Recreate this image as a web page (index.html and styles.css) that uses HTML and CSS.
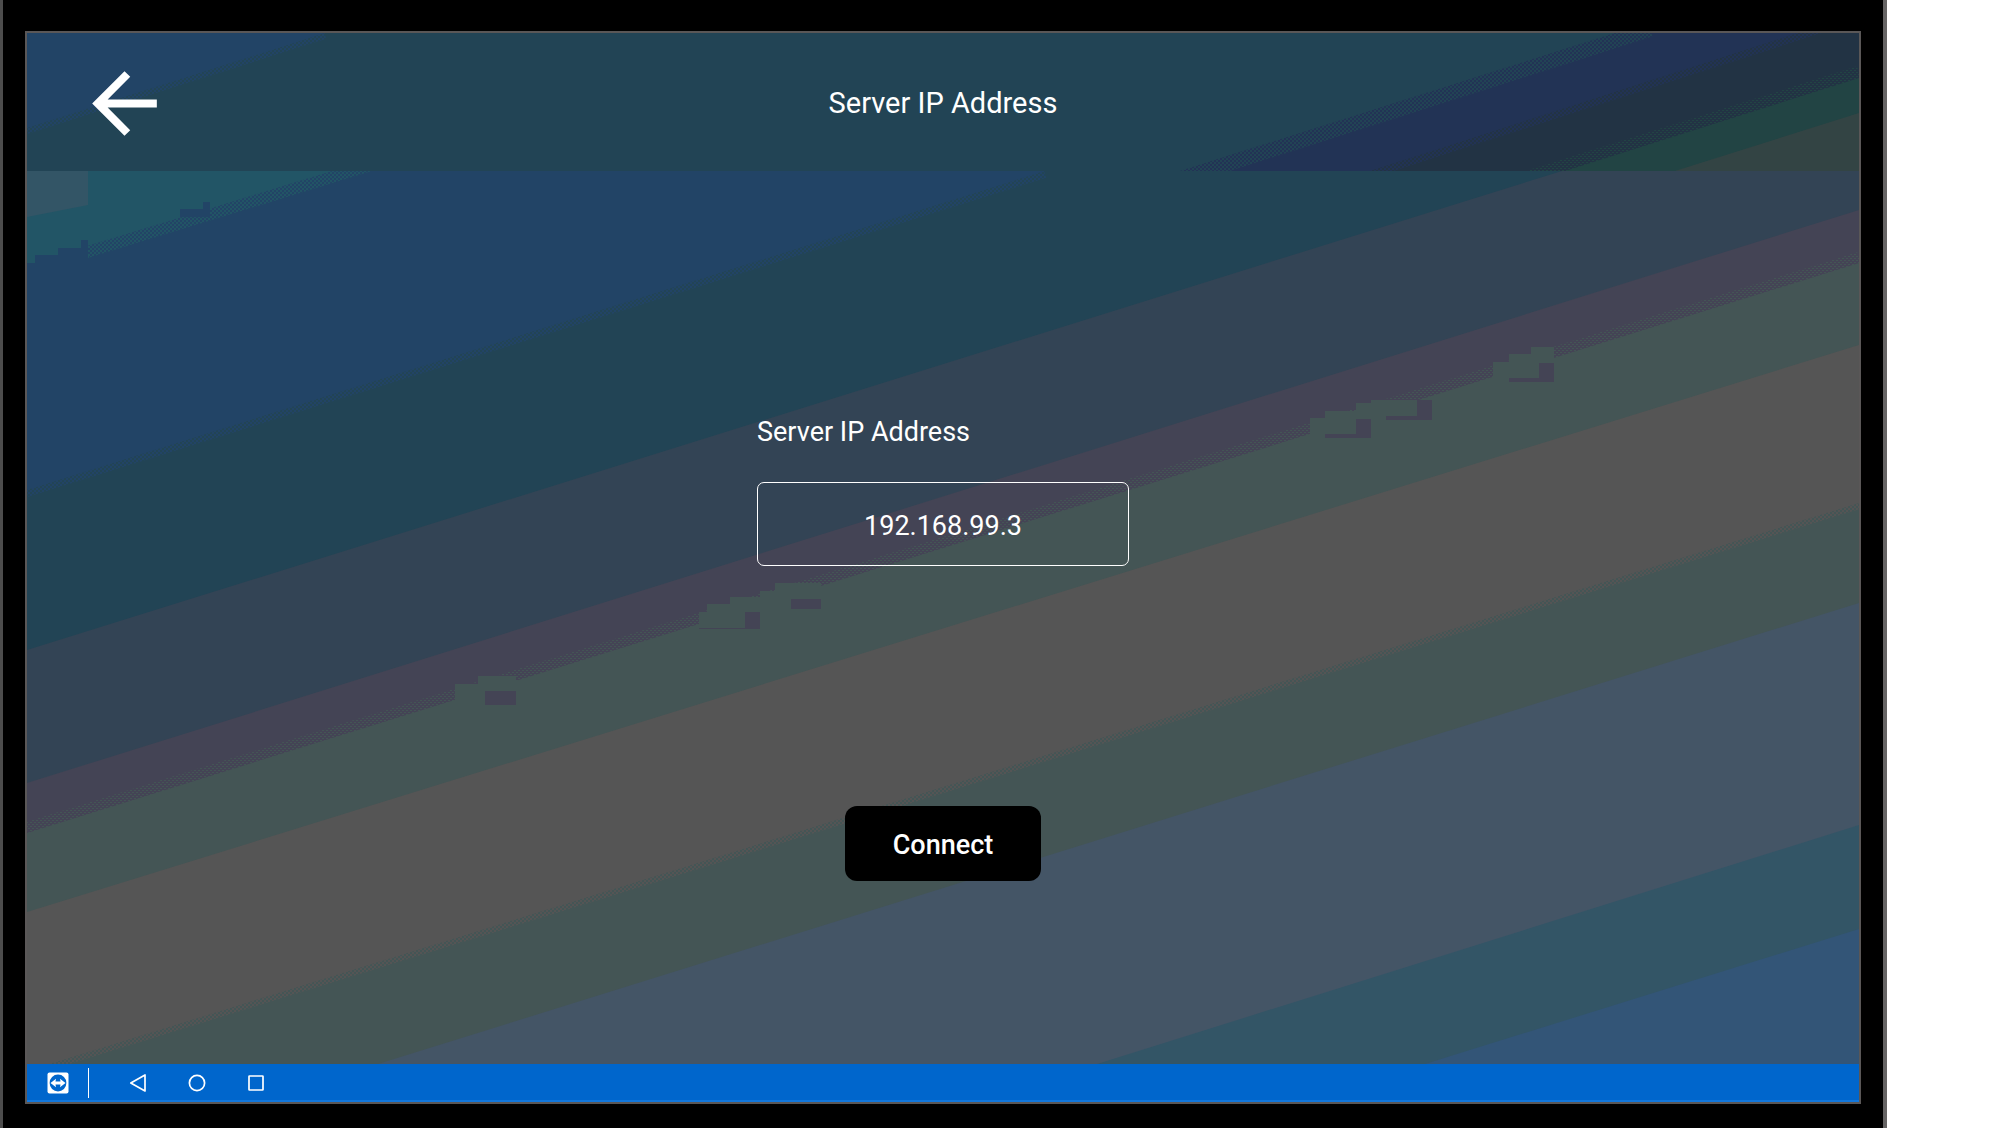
FILE: index.html
```html
<!DOCTYPE html>
<html lang="en">
<head>
<meta charset="utf-8">
<meta name="viewport" content="width=device-width, initial-scale=1">
<title>Server IP Address</title>
<link rel="stylesheet" href="styles.css">
</head>
<body>
<div class="device">
  <div class="screen">
    <div class="app">
      <svg class="backdrop" viewBox="27 33 1832 1031" preserveAspectRatio="none" aria-hidden="true">
        <defs>
          <pattern id="dots-plum" width="4" height="4" patternUnits="userSpaceOnUse"><path fill="#445555" d="M0 0h2v1H0zM2 2h2v1H2z"/></pattern>
          <pattern id="dots-blue" width="4" height="4" patternUnits="userSpaceOnUse"><path fill="#224466" d="M0 0h2v2H0zM2 2h2v2H2z"/></pattern>
          <pattern id="dots-slate" width="4" height="4" patternUnits="userSpaceOnUse"><path fill="#224455" d="M0 0h2v2H0zM2 2h2v2H2z"/></pattern>
          <pattern id="dots-navy" width="4" height="4" patternUnits="userSpaceOnUse"><path fill="#223355" d="M0 0h2v2H0zM2 2h2v2H2z"/></pattern>
          <pattern id="dots-green" width="4" height="4" patternUnits="userSpaceOnUse"><path fill="#224444" d="M0 0h2v1H0zM2 2h2v1H2z"/></pattern>
          <pattern id="dots-grey" width="4" height="4" patternUnits="userSpaceOnUse"><path fill="#555555" d="M0 0h2v2H0zM2 2h2v2H2z"/></pattern>
          <clipPath id="top"><path d="M27 33H1859V171H27z"/></clipPath>
          <clipPath id="bottom"><path d="M27 171H1859V1064H27z"/></clipPath>
        </defs>
        <g clip-path="url(#bottom)">
          <path fill="#224466" d="M27 171H1859V1064H27z"/>
          <path fill="#224455" d="M27 490L1045 171H1859V1064H27z"/>
          <path fill="#334455" d="M27 650L1562 171H1859V1064H27z"/>
          <path fill="#444455" d="M27 783L1859 210V1064H27z"/>
          <path fill="#445555" d="M27 833L1859 263V1064H27z"/>
          <path fill="#555555" d="M27 912L1859 345V1064H27z"/>
          <path fill="#445555" d="M27 1071L1859 503V1064z"/>
          <path fill="#445566" d="M378 1064L1859 603V1064z"/>
          <path fill="#335566" d="M1097 1064L1859 825V1064z"/>
          <path fill="#335577" d="M1425 1064L1859 929V1064z"/>
          <path stroke="url(#dots-blue)" stroke-width="8" d="M27 493L1045 174"/>
          <path stroke="url(#dots-plum)" stroke-width="12" d="M27 828L1859 258"/>
          <path stroke="url(#dots-grey)" stroke-width="8" d="M27 1073L1859 505"/>
          <path fill="#225566" d="M27 171H372L88 258V240H81V248H58V255H35V263H27z"/>
          <path stroke="url(#dots-blue)" stroke-width="14" d="M88 253L372 166"/>
          <path fill="#335566" d="M27 171H88V205L27 217z"/>
          <path fill="#224466" d="M180 209h23v-7h7v15h-30z"/>
          <path fill="#445555" d="M455 684h23v-8h38v34h-61zM699 612h8v-8h23v-7h30v-6h15v-8h46v46H699zM1310 418h15v-7h31v-8h15v-3h61v38h-122zM1493 362h16v-8h22v-7h23v35h-61z"/>
          <path fill="#444455" d="M485 691h31v14h-31zM745 612h15v17h-61v-1h46zM791 599h30v10h-30zM1356 419h15v19h-46v-4h31zM1417 400h15v20h-46v-4h31zM1539 363h15v19h-45v-4h30z"/>
        </g>
        <g clip-path="url(#top)">
          <path fill="#224466" d="M27 33H1859V171H27z"/>
          <path fill="#224455" d="M27 128L325 33H1859V171H27z"/>
          <path fill="#223355" d="M1180 171L1615 33H1859V171z"/>
          <path fill="#223344" d="M1370 171L1798 33H1859V171z"/>
          <path fill="#224444" d="M1565 171L1859 78V171z"/>
          <path fill="#334444" d="M1675 171L1859 113V171z"/>
          <path stroke="url(#dots-blue)" stroke-width="8" d="M27 130L325 35"/>
          <path stroke="url(#dots-slate)" stroke-width="16" d="M1150 188L1650 29"/>
          <path stroke="url(#dots-navy)" stroke-width="10" d="M1340 183L1830 25"/>
          <path stroke="url(#dots-green)" stroke-width="14" d="M1530 177L1859 73"/>
        </g>
      </svg>
      <header class="bar">
        <button class="back" type="button" aria-label="Back">
          <svg viewBox="0 0 24 24" aria-hidden="true"><path fill="#fff" d="M20 11H7.83l5.59-5.59L12 4l-8 8 8 8 1.41-1.41L7.83 13H20z"/></svg>
        </button>
        <h1 class="title">Server IP Address</h1>
      </header>
      <form class="form">
        <div class="field">
          <label class="label" for="ip">Server IP Address</label>
          <input class="input" id="ip" type="text" value="192.168.99.3">
        </div>
        <button class="connect" type="button">Connect</button>
      </form>
    </div>
    <nav class="nav" aria-label="System">
      <button class="remote" type="button" aria-label="Remote control">
        <svg width="22" height="22" viewBox="0 0 22 22" aria-hidden="true"><rect x="0.5" y="0.5" width="21" height="21" rx="2" fill="#fff"/><circle cx="11" cy="11" r="8.4" fill="#0066cc"/><path fill="#fff" d="M3.500 11L9 6.800l-.5 2.800h5L13 6.800l5.500 4.200-5.500 4.200.5-2.800h-5l.5 2.800z"/></svg>
      </button>
      <span class="divider"></span>
      <button class="key" type="button" aria-label="Back">
        <svg width="20" height="20" viewBox="0 0 20 20" aria-hidden="true"><path fill="none" stroke="#fff" stroke-width="1.700" stroke-linejoin="round" d="M17 2V18L2.800 10z"/></svg>
      </button>
      <button class="key" type="button" aria-label="Home">
        <svg width="20" height="20" viewBox="0 0 20 20" aria-hidden="true"><circle cx="10" cy="10" r="7.600" fill="none" stroke="#fff" stroke-width="1.700"/></svg>
      </button>
      <button class="key" type="button" aria-label="Recent apps">
        <svg width="20" height="20" viewBox="0 0 20 20" aria-hidden="true"><rect x="3" y="3" width="14" height="14" rx="0.500" fill="none" stroke="#fff" stroke-width="1.700"/></svg>
      </button>
    </nav>
  </div>
</div>
</body>
</html>
```
FILE: styles.css
```css
* {
  box-sizing: border-box;
}

body {
  margin: 0;
  background: #fff;
  color: #fff;
  font-family: Roboto, "Liberation Sans", sans-serif;
}

button {
  padding: 0;
  border: 0;
  background: none;
  color: inherit;
  font-family: inherit;
  cursor: pointer;
}

svg {
  display: block;
}

.device {
  display: flex;
  min-height: 100vh;
  margin-right: 108px;
  padding: 31px 22px 24px;
  border-left: 3px solid #4d4d4d;
  border-right: 4px solid #666464;
  background: #000;
}

.screen {
  display: flex;
  flex: 1;
  flex-direction: column;
  border: 2px solid #5a5757;
}

.app {
  position: relative;
  display: flex;
  flex: 1;
  flex-direction: column;
}

.backdrop {
  position: absolute;
  inset: 0;
  width: 100%;
  height: 100%;
}

.bar,
.form {
  position: relative;
}

.bar {
  display: grid;
  grid-template-columns: 1fr auto 1fr;
  align-items: center;
  height: 138px;
  padding: 2px 49px 0;
}

.back {
  width: 97px;
}

.title {
  margin: 0;
  font-size: 29px;
  font-weight: 400;
  line-height: 36px;
}

.form {
  display: flex;
  flex-direction: column;
  align-items: center;
  gap: 240px;
  padding: 245px 24px 24px;
}

.field {
  display: flex;
  flex-direction: column;
  gap: 34px;
  width: 100%;
  max-width: 372px;
}

.label {
  font-size: 27px;
  line-height: 32px;
}

.input {
  width: 100%;
  height: 84px;
  padding: 3px 16px 0;
  border: 1px solid #fff;
  border-radius: 7px;
  background: transparent;
  color: inherit;
  font-family: inherit;
  font-size: 27px;
  text-align: center;
}

.connect {
  width: 196px;
  height: 75px;
  padding-top: 2px;
  border-radius: 12px;
  background: #000;
  font-size: 27px;
  font-weight: 500;
}

.nav {
  display: flex;
  align-items: center;
  height: 38px;
  padding-left: 20px;
  background: #0066cc;
  box-shadow: inset 0 -2px #1177dd;
}

.divider {
  width: 1px;
  height: 30px;
  margin: 0 19px;
  background: #fff;
}

.key {
  display: flex;
  justify-content: center;
  width: 59px;
}
```
